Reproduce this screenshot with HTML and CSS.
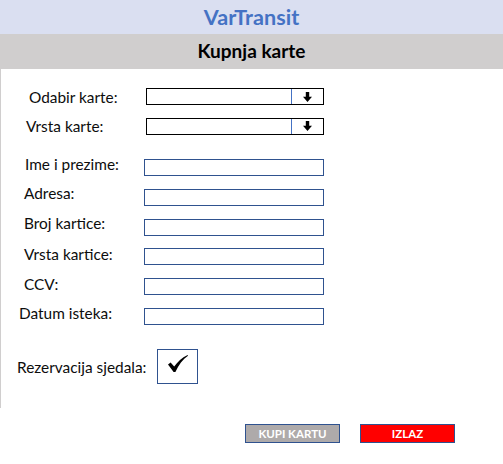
FILE: index.html
```html
<!DOCTYPE html>
<html lang="hr">
<head>
<meta charset="utf-8">
<title>VarTransit - Kupnja karte</title>
<link rel="stylesheet" href="styles.css">
</head>
<body>
<div class="app">
  <header class="brand">VarTransit</header>
  <div class="subhead">Kupnja karte</div>
  <main class="form">
    <div class="row">
      <label class="lbl ind-odabir">Odabir karte:</label>
      <div class="select">
        <span class="select-field"></span>
        <span class="select-btn">
          <svg width="9" height="10" viewBox="0 0 9 10"><polygon points="2.8,0 6.2,0 6.2,4.8 9,4.8 4.5,10 0,4.8 2.8,4.8" fill="#000"/></svg>
        </span>
      </div>
    </div>
    <div class="row">
      <label class="lbl ind-vrsta">Vrsta karte:</label>
      <div class="select">
        <span class="select-field"></span>
        <span class="select-btn">
          <svg width="9" height="10" viewBox="0 0 9 10"><polygon points="2.8,0 6.2,0 6.2,4.8 9,4.8 4.5,10 0,4.8 2.8,4.8" fill="#000"/></svg>
        </span>
      </div>
    </div>

    <div class="row row-first">
      <label class="lbl ind-ime">Ime i prezime:</label>
      <div class="input"></div>
    </div>
    <div class="row">
      <label class="lbl lbl-high">Adresa:</label>
      <div class="input"></div>
    </div>
    <div class="row">
      <label class="lbl lbl-high">Broj kartice:</label>
      <div class="input"></div>
    </div>
    <div class="row">
      <label class="lbl lbl-mid">Vrsta kartice:</label>
      <div class="input"></div>
    </div>
    <div class="row">
      <label class="lbl lbl-mid">CCV:</label>
      <div class="input"></div>
    </div>
    <div class="row">
      <label class="lbl lbl-mid ind-datum">Datum isteka:</label>
      <div class="input"></div>
    </div>

    <div class="row row-check">
      <label class="lbl ind-rez">Rezervacija sjedala:</label>
      <div class="checkbox">
        <svg width="20" height="17" viewBox="0 0 20 17"><path d="M0,9.6 L2.6,7.6 L6.2,11.6 C9.5,6.8 13.8,2.6 19.6,0 L20,0.7 C14.8,4.4 10.6,9.8 7.4,17 L5.6,17 Z" fill="#000"/></svg>
      </div>
    </div>
  </main>
  <footer class="actions">
    <button class="btn btn-buy">KUPI KARTU</button>
    <button class="btn btn-exit">IZLAZ</button>
  </footer>
</div>
</body>
</html>
```

FILE: styles.css
```css
html, body {
  margin: 0;
  padding: 0;
  background: #ffffff;
}

body {
  font-family: Lato, "Open Sans", "Liberation Sans", sans-serif;
  color: #0d0d0d;
}

.app {
  width: 503px;
}

.brand {
  height: 34px;
  background: #dadff1;
  color: #4472c4;
  font-weight: 700;
  font-size: 21.6px;
  line-height: 34px;
  text-align: center;
}

.subhead {
  height: 35px;
  background: #d0cece;
  color: #000000;
  font-weight: 700;
  font-size: 19px;
  line-height: 34px;
  text-align: center;
}

.form {
  height: 339px;
  box-sizing: border-box;
  border-left: 1px solid #d0cece;
  padding-top: 19px;
  display: flex;
  flex-direction: column;
  gap: 12.75px;
}

.row {
  display: flex;
  align-items: flex-start;
  height: 17px;
}

.row-first {
  margin-top: 11.5px;
}

.lbl {
  box-sizing: border-box;
  width: 143px;
  padding-left: 23px;
  font-size: 15.4px;
  line-height: 17px;
  white-space: nowrap;
}

.lbl-high {
  margin-top: -4px;
}

.lbl-mid {
  margin-top: -2.5px;
}

.ind-odabir {
  padding-left: 28px;
  margin-top: 1px;
  width: 145px;
}

.ind-vrsta {
  padding-left: 25px;
  margin-top: 0;
  width: 145px;
}

.ind-ime {
  padding-left: 24px;
  margin-top: -3px;
}

.ind-datum {
  padding-left: 18px;
}

.ind-rez {
  padding-left: 16px;
  width: 156px;
  margin-top: 9.5px;
}

.select {
  box-sizing: border-box;
  width: 178px;
  height: 17px;
  border: 1px solid #000000;
  display: flex;
}

.select-field {
  flex: 1;
  border-right: 1px solid #4472c4;
}

.select-btn {
  width: 31px;
  display: flex;
  align-items: center;
  justify-content: center;
}

.input {
  box-sizing: border-box;
  width: 180px;
  height: 17px;
  border: 1px solid #2f528f;
}

.row-check {
  height: 35px;
  margin-top: 11.5px;
}

.checkbox {
  box-sizing: border-box;
  width: 41px;
  height: 35px;
  border: 1px solid #2f528f;
  display: flex;
  justify-content: center;
  padding-top: 5px;
}

.actions {
  display: flex;
  justify-content: flex-end;
  gap: 20px;
  padding: 16px 48px 0 0;
}

.btn {
  box-sizing: border-box;
  width: 95px;
  height: 19px;
  border: 1px solid #2f528f;
  color: #ffffff;
  font-family: Lato, "Open Sans", "Liberation Sans", sans-serif;
  font-weight: 700;
  font-size: 11.5px;
  line-height: 16px;
  padding: 0;
  text-align: center;
}

.btn-buy {
  background: #aeaaaa;
}

.btn-exit {
  background: #ff0000;
}
```
